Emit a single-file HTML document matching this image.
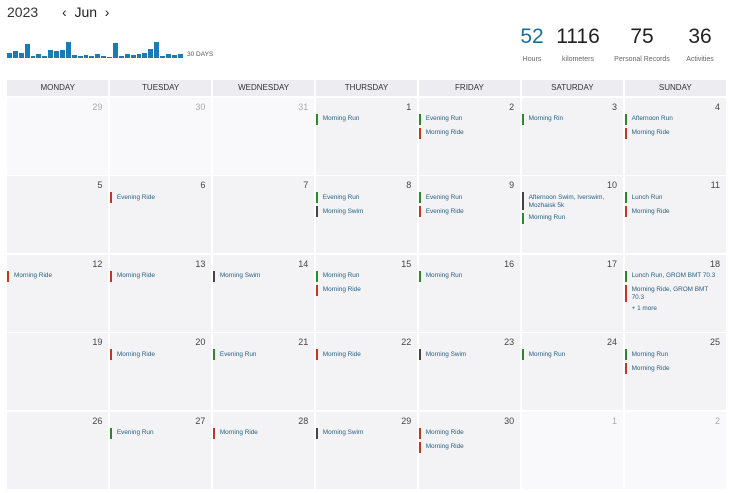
<!DOCTYPE html><html><head><style>
body{margin:0;width:730px;height:493px;background:#fff;font-family:"Liberation Sans",sans-serif;position:relative;overflow:hidden}
.yr{position:absolute;left:7px;top:4px;font-size:14px;color:#333}
.mo{position:absolute;left:62px;top:4px;font-size:14px;color:#222}
.spark{position:absolute;left:7px;top:38px;width:178px;height:20px;display:flex;align-items:flex-end;gap:1px}
.spark i{display:block;width:4.9px;background:#1a7cb5;border-bottom:1px solid #1a7cb5}
.d30{position:absolute;left:187px;top:51px;font-size:6.5px;color:#555}
.st{position:absolute;top:26px;text-align:center}
.st b{display:block;font-weight:normal;font-size:21px;color:#222;line-height:22px}
.st span{font-size:7px;color:#666}
.grid{position:absolute;left:7px;top:80px;width:719px;display:grid;grid-template-columns:repeat(7,1fr);grid-template-rows:16px repeat(5,77px);gap:1.5px}
.h{background:#ececf1;font-size:8px;color:#333;text-align:center;line-height:16px}
.c{background:#f3f3f6;position:relative;padding-top:16px}
.o{background:#f9f9fb}
.n{position:absolute;right:6px;top:4px;font-size:9px;color:#444}
.o .n{color:#aaa}
.e{font-size:6.4px;color:#245f80;margin:0 4px 3px 0;padding-left:5px;border-left:2px solid;line-height:8px;min-height:11px;box-sizing:border-box;padding-top:1.5px}
.r{border-color:#2a8a2a}.d{border-color:#c0391b}.s{border-color:#444}
.m{font-size:6.4px;color:#245f80;margin-left:7px}
</style></head><body>
<div class="yr">2023</div><div class="mo">‹&nbsp; Jun &nbsp;›</div>
<div class="spark">
<i style="height:4px"></i><i style="height:6px"></i><i style="height:4px"></i><i style="height:13px"></i><i style="height:1px"></i><i style="height:3px"></i><i style="height:1px"></i><i style="height:7px"></i><i style="height:6px"></i><i style="height:7px"></i><i style="height:15px"></i><i style="height:2px"></i><i style="height:1px"></i><i style="height:2px"></i><i style="height:1px"></i><i style="height:3px"></i><i style="height:1px"></i><i style="height:0"></i><i style="height:14px"></i><i style="height:1px"></i><i style="height:3px"></i><i style="height:2px"></i><i style="height:3px"></i><i style="height:4px"></i><i style="height:8px"></i><i style="height:15px"></i><i style="height:1px"></i><i style="height:3px"></i><i style="height:2px"></i><i style="height:3px"></i>
</div>
<div class="d30">30 DAYS</div>
<div class="st" style="left:517px;width:30px"><b style="color:#1a6fa0">52</b><span>Hours</span></div>
<div class="st" style="left:554px;width:48px"><b>1116</b><span>kilometers</span></div>
<div class="st" style="left:610px;width:64px"><b>75</b><span>Personal Records</span></div>
<div class="st" style="left:682px;width:36px"><b>36</b><span>Activities</span></div>
<div class="grid">
<div class="h">MONDAY</div><div class="h">TUESDAY</div><div class="h">WEDNESDAY</div><div class="h">THURSDAY</div><div class="h">FRIDAY</div><div class="h">SATURDAY</div><div class="h">SUNDAY</div>
<div class="c o"><span class="n">29</span></div>
<div class="c o"><span class="n">30</span></div>
<div class="c o"><span class="n">31</span></div>
<div class="c"><span class="n">1</span><div class="e r">Morning Run</div></div>
<div class="c"><span class="n">2</span><div class="e r">Evening Run</div><div class="e d">Morning Ride</div></div>
<div class="c"><span class="n">3</span><div class="e r">Morning Rin</div></div>
<div class="c"><span class="n">4</span><div class="e r">Afternoon Run</div><div class="e d">Morning Ride</div></div>
<div class="c"><span class="n">5</span></div>
<div class="c"><span class="n">6</span><div class="e d">Evening Ride</div></div>
<div class="c"><span class="n">7</span></div>
<div class="c"><span class="n">8</span><div class="e r">Evening Run</div><div class="e s">Morning Swim</div></div>
<div class="c"><span class="n">9</span><div class="e r">Evening Run</div><div class="e d">Evening Ride</div></div>
<div class="c"><span class="n">10</span><div class="e s">Afternoon Swim, Iverswim, Mozhaisk 5k</div><div class="e r">Morning Run</div></div>
<div class="c"><span class="n">11</span><div class="e r">Lunch Run</div><div class="e d">Morning Ride</div></div>
<div class="c"><span class="n">12</span><div class="e d">Morning Ride</div></div>
<div class="c"><span class="n">13</span><div class="e d">Morning Ride</div></div>
<div class="c"><span class="n">14</span><div class="e s">Morning Swim</div></div>
<div class="c"><span class="n">15</span><div class="e r">Morning Run</div><div class="e d">Morning Ride</div></div>
<div class="c"><span class="n">16</span><div class="e r">Morning Run</div></div>
<div class="c"><span class="n">17</span></div>
<div class="c"><span class="n">18</span><div class="e r">Lunch Run, GROM BMT 70.3</div><div class="e d">Morning Ride, GROM BMT 70.3</div><div class="m">+ 1 more</div></div>
<div class="c"><span class="n">19</span></div>
<div class="c"><span class="n">20</span><div class="e d">Morning Ride</div></div>
<div class="c"><span class="n">21</span><div class="e r">Evening Run</div></div>
<div class="c"><span class="n">22</span><div class="e d">Morning Ride</div></div>
<div class="c"><span class="n">23</span><div class="e s">Morning Swim</div></div>
<div class="c"><span class="n">24</span><div class="e r">Morning Run</div></div>
<div class="c"><span class="n">25</span><div class="e r">Morning Run</div><div class="e d">Morning Ride</div></div>
<div class="c"><span class="n">26</span></div>
<div class="c"><span class="n">27</span><div class="e r">Evening Run</div></div>
<div class="c"><span class="n">28</span><div class="e d">Morning Ride</div></div>
<div class="c"><span class="n">29</span><div class="e s">Morning Swim</div></div>
<div class="c"><span class="n">30</span><div class="e d">Morning Ride</div><div class="e d">Morning Ride</div></div>
<div class="c o"><span class="n">1</span></div>
<div class="c o"><span class="n">2</span></div>
</div>
</body></html>
